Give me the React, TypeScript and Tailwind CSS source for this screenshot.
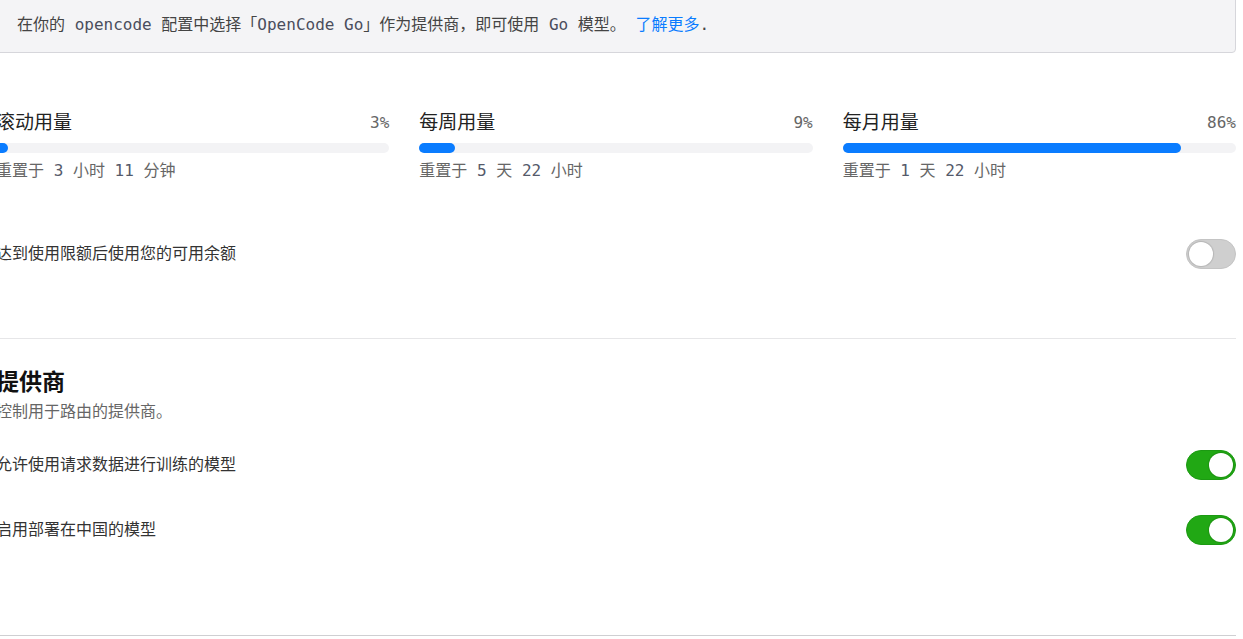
import { useState } from "react";

const mono = "font-['DejaVu_Sans_Mono','Noto_Sans_CJK_SC',monospace]";
const sans = "font-['Liberation_Sans','Noto_Sans_CJK_SC',sans-serif]";

const usage = [
  { id: "rolling", title: "滚动用量", percent: 3, reset: ["3", "小时", "11", "分钟"] },
  { id: "weekly", title: "每周用量", percent: 9, reset: ["5", "天", "22", "小时"] },
  { id: "monthly", title: "每月用量", percent: 86, reset: ["1", "天", "22", "小时"] },
];

function Toggle({ on, onChange }: { on: boolean; onChange: () => void }) {
  return (
    <button
      type="button"
      role="switch"
      aria-checked={on}
      onClick={onChange}
      className={
        "flex h-[30px] w-[50px] shrink-0 items-center rounded-full border p-[2px] transition-colors " +
        (on ? "justify-end border-[#1c9a12] bg-[#21a814]" : "justify-start border-[#c4c4c4] bg-[#cfcfcf]")
      }
    >
      <span className="h-[24px] w-[24px] rounded-full bg-white shadow-[0_0_1px_1px_rgba(0,0,0,0.12)]" />
    </button>
  );
}

export default function App() {
  const [useBalance, setUseBalance] = useState(false);
  const [allowTraining, setAllowTraining] = useState(true);
  const [chinaModels, setChinaModels] = useState(true);

  return (
    <div className={`${mono} h-[639px] w-full overflow-hidden bg-white text-[16px] text-[#333]`}>
      <div className="-ml-[4px] w-[1240px]">
        {/* ── Go provider notice ───────────────────────── */}
        <div className="-mt-[8px] whitespace-pre rounded-[4px] border border-[#d6d6db] bg-[#f4f4f6] px-5 pt-5 pb-[15px] leading-[24px] text-[#444]">
          在你的 <span className="text-[#4a4d5c]">opencode</span> 配置中选择「<span className="text-[#4a4d5c]">OpenCode Go</span>」作为提供商，即可使用 <span className="text-[#4a4d5c]">Go</span> 模型。 <a href="#" className="text-[#0a7cff]">了解更多</a>.
        </div>

        {/* ── Usage bars ───────────────────────────────── */}
        <div className="mt-[56px] grid grid-cols-3 gap-[30px]">
          {usage.map((u) => (
            <div key={u.id}>
              <div className="flex items-center justify-between leading-[28px]">
                <span className={`${sans} text-[19px] text-[#222]`}>{u.title}</span>
                <span className="text-[#666]">{u.percent}%</span>
              </div>
              <div className="mt-[6px] h-[10px] rounded-full bg-[#f3f3f5]">
                <div className="h-full rounded-full bg-[#0a7cff]" style={{ width: `${u.percent}%` }} />
              </div>
              <div className="mt-[6px] whitespace-pre leading-[24px] text-[#666]">
                重置于
                {u.reset.map((part, i) => (
                  <span key={i} className={i % 2 === 0 ? "text-[#555a6a]" : ""}>
                    {" " + part}
                  </span>
                ))}
              </div>
            </div>
          ))}
        </div>

        <div className="mt-[56px] flex items-center justify-between pb-[69px]">
          <span>达到使用限额后使用您的可用余额</span>
          <Toggle on={useBalance} onChange={() => setUseBalance(!useBalance)} />
        </div>

        {/* ── Providers ────────────────────────────────── */}
        <div className="border-t border-[#e6e6e8] pt-[28px] pb-[90px]">
          <h2 className={`${sans} text-[23px] leading-[30px] font-bold text-[#111]`}>提供商</h2>
          <p className="mt-[4px] leading-[22px] text-[#666]">控制用于路由的提供商。</p>

          <div className="mt-[27px] flex flex-col gap-[35px]">
            <div className="flex items-center justify-between">
              <span>允许使用请求数据进行训练的模型</span>
              <Toggle on={allowTraining} onChange={() => setAllowTraining(!allowTraining)} />
            </div>
            <div className="flex items-center justify-between">
              <span>启用部署在中国的模型</span>
              <Toggle on={chinaModels} onChange={() => setChinaModels(!chinaModels)} />
            </div>
          </div>
        </div>
        <div className="border-t border-[#cfcfd2]" />
      </div>
    </div>
  );
}
